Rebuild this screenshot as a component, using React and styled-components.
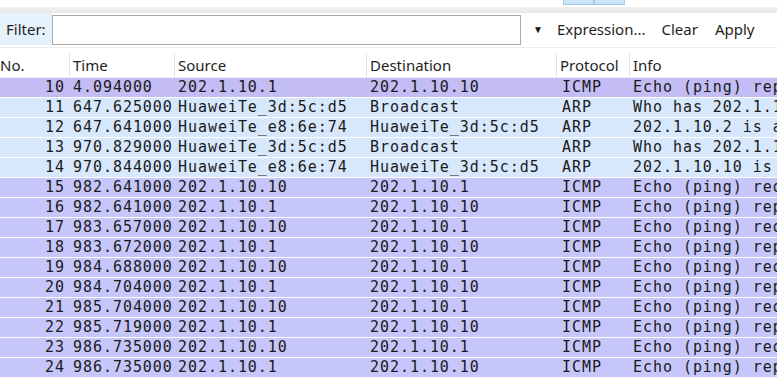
import React from "react";
import styled, { createGlobalStyle } from "styled-components";

const Global = createGlobalStyle`
  html, body { margin: 0; padding: 0; background: #ffffff; overflow: hidden; }
  body { width: 777px; height: 378px; }
`;

const Page = styled.div`
  width: 777px;
  height: 378px;
  overflow: hidden;
  background: #ffffff;
  display: flex;
  flex-direction: column;
`;

const TopStrip = styled.div`
  height: 7px;
  display: flex;
  padding-left: 563px;
  background: #ffffff;
`;

const TabStub = styled.div`
  width: 31px;
  height: 5px;
  background: #cce4f7;
  border: 1px solid #99c9ef;
  border-top: none;
  box-sizing: border-box;
`;

const Band = styled.div`
  height: 6px;
  background: linear-gradient(#f0f0f0, #e6e6e6);
`;

const FilterBar = styled.div`
  height: 35px;
  display: flex;
  align-items: stretch;
  font-family: "Noto Sans", "Open Sans", sans-serif;
  font-size: 15px;
  color: #1e1e1e;
  box-sizing: border-box;
  padding-bottom: 2px;
`;

const FilterLabel = styled.div`
  width: 52px;
  background: #e5f1fb;
  display: flex;
  align-items: center;
  padding-left: 6px;
  box-sizing: border-box;
`;

const FilterInput = styled.div`
  width: 469px;
  margin-top: 2px;
  border: 1px solid #a9a9a9;
  background: #ffffff;
  box-sizing: border-box;
`;

const Drop = styled.div`
  width: 36px;
  display: flex;
  align-items: center;
  justify-content: center;
  font-size: 10px;
  color: #111;
  padding-right: 2px;
  box-sizing: border-box;
`;

const Action = styled.div`
  display: flex;
  align-items: center;
  margin-left: ${(p) => p.$ml || 0}px;
`;

const Gap = styled.div`
  height: 3px;
  background: #ffffff;
  border-top: 1px solid #ececec;
`;

const cols = "69px 105px 192px 190px 73px 1fr";

const Header = styled.div`
  height: 27px;
  display: grid;
  grid-template-columns: ${cols};
  font-family: "Noto Sans", "Open Sans", sans-serif;
  font-size: 15px;
  color: #1e1e1e;
  background: #ffffff;
  border-bottom: 1px solid #f0f0f0;
  box-sizing: border-box;
`;

const HeadCell = styled.div`
  display: flex;
  align-items: center;
  padding-left: ${(p) => (p.$first ? 0 : 3)}px;
  border-left: ${(p) => (p.$first ? "none" : "1px solid #e3e3e3")};
  margin-top: 2px;
  white-space: nowrap;
  overflow: hidden;
`;

const Row = styled.div`
  height: 20px;
  display: grid;
  grid-template-columns: ${cols};
  background: ${(p) => p.$bg};
  border-bottom: 1px solid #ffffff;
  box-sizing: border-box;
  font-family: "DejaVu Sans Mono", "Liberation Mono", monospace;
  font-size: 15px;
  letter-spacing: 0.95px;
  color: #1a1a1a;
  line-height: 19px;
`;

const Cell = styled.div`
  white-space: nowrap;
  overflow: hidden;
  text-align: ${(p) => (p.$right ? "right" : "left")};
  padding-left: ${(p) => (p.$right ? 0 : p.$pl ?? 4)}px;
  padding-right: ${(p) => (p.$right ? 4 : 0)}px;
`;

const ICMP = "#c7c6fb";
const ICMP_SEL = "#c4bcf4";
const ARP = "#d7e8fd";

const rows = [
  [10, "4.094000", "202.1.10.1", "202.1.10.10", "ICMP", "Echo (ping) reply", ICMP_SEL],
  [11, "647.625000", "HuaweiTe_3d:5c:d5", "Broadcast", "ARP", "Who has 202.1.10.2?", ARP],
  [12, "647.641000", "HuaweiTe_e8:6e:74", "HuaweiTe_3d:5c:d5", "ARP", "202.1.10.2 is at", ARP],
  [13, "970.829000", "HuaweiTe_3d:5c:d5", "Broadcast", "ARP", "Who has 202.1.10.2?", ARP],
  [14, "970.844000", "HuaweiTe_e8:6e:74", "HuaweiTe_3d:5c:d5", "ARP", "202.1.10.10 is at", ARP],
  [15, "982.641000", "202.1.10.10", "202.1.10.1", "ICMP", "Echo (ping) request", ICMP],
  [16, "982.641000", "202.1.10.1", "202.1.10.10", "ICMP", "Echo (ping) reply", ICMP],
  [17, "983.657000", "202.1.10.10", "202.1.10.1", "ICMP", "Echo (ping) request", ICMP],
  [18, "983.672000", "202.1.10.1", "202.1.10.10", "ICMP", "Echo (ping) reply", ICMP],
  [19, "984.688000", "202.1.10.10", "202.1.10.1", "ICMP", "Echo (ping) request", ICMP],
  [20, "984.704000", "202.1.10.1", "202.1.10.10", "ICMP", "Echo (ping) reply", ICMP],
  [21, "985.704000", "202.1.10.10", "202.1.10.1", "ICMP", "Echo (ping) request", ICMP],
  [22, "985.719000", "202.1.10.1", "202.1.10.10", "ICMP", "Echo (ping) reply", ICMP],
  [23, "986.735000", "202.1.10.10", "202.1.10.1", "ICMP", "Echo (ping) request", ICMP],
  [24, "986.735000", "202.1.10.1", "202.1.10.10", "ICMP", "Echo (ping) reply", ICMP],
];

export default function App() {
  return (
    <Page>
      <Global />
      <TopStrip>
        <TabStub />
        <TabStub />
      </TopStrip>
      <Band />
      <FilterBar>
        <FilterLabel>Filter:</FilterLabel>
        <FilterInput />
        <Drop>▼</Drop>
        <Action>Expression...</Action>
        <Action $ml={16}>Clear</Action>
        <Action $ml={17}>Apply</Action>
      </FilterBar>
      <Gap />
      <Header>
        <HeadCell $first>No.</HeadCell>
        <HeadCell>Time</HeadCell>
        <HeadCell>Source</HeadCell>
        <HeadCell>Destination</HeadCell>
        <HeadCell>Protocol</HeadCell>
        <HeadCell>Info</HeadCell>
      </Header>
      {rows.map((r) => (
        <Row key={r[0]} $bg={r[6]}>
          <Cell $right>{r[0]}</Cell>
          <Cell>{r[1]}</Cell>
          <Cell>{r[2]}</Cell>
          <Cell>{r[3]}</Cell>
          <Cell $pl={6}>{r[4]}</Cell>
          <Cell>{r[5]}</Cell>
        </Row>
      ))}
    </Page>
  );
}
